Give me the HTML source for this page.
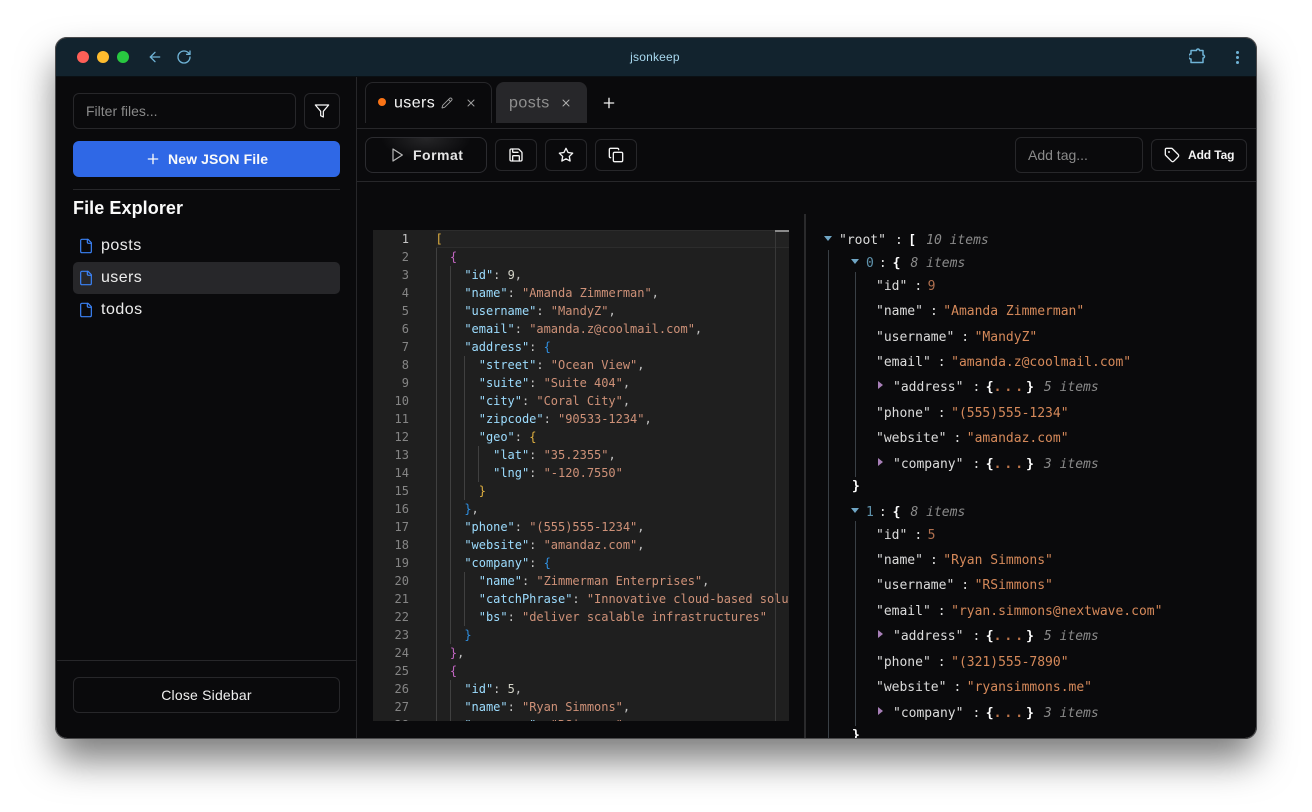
<!DOCTYPE html>
<html lang="en"><head><meta charset="utf-8"><title>jsonkeep</title>
<style>
html,body{margin:0;padding:0;width:1312px;height:812px;overflow:hidden;background:#fff}
*{box-sizing:border-box}
.a{position:absolute;white-space:pre}
body{font-family:"Liberation Sans",sans-serif;color:#fafafa}
#win{position:absolute;left:56px;top:38px;width:1200px;height:700px;border-radius:11px;box-shadow:0 22px 38px rgba(0,0,0,.52),0 0 0 1px #3a3a3c}
#clip{position:absolute;left:0;top:0;width:1312px;height:812px;overflow:hidden}
.box{position:absolute;border:1px solid #27272a;border-radius:6px;background:#0a0a0c}
.ln{position:absolute;background:#27272a}
svg{position:absolute;fill:none;stroke:currentColor;stroke-width:2;stroke-linecap:round;stroke-linejoin:round}
.code{position:absolute;left:0;top:0;font:12px/18px "DejaVu Sans Mono",monospace;color:#c4c4c4;white-space:pre;letter-spacing:-.02px}
.k{color:#9cdcfe}.s{color:#ce9178}.n{color:#d4d4c8}.y{color:#e0b040}.p{color:#c266c2}.b{color:#2f8fe0}
.g{position:absolute;width:1px;background:#404040}
.num{position:absolute;left:373px;width:36px;text-align:right;font:12px/18px "DejaVu Sans Mono",monospace;color:#858585;white-space:pre}
.t{position:absolute;font:13px/20px "DejaVu Sans Mono",monospace;color:#dcdcdc;white-space:pre}
.t i{color:#8a8a8a;font-style:italic;margin-left:10px}
.t b{color:#fff}
.t u{text-decoration:none;color:#d5895a}
.t em{font-style:normal;color:#b0704f}
.t .c{display:inline-block;margin:0 5.5px 0 7px}
.t .c2{display:inline-block;margin:0 5.5px 0 9px}
.t .c3{display:inline-block;margin:0 6px 0 5px}
.t .idx{color:#5f93ad}
.t .d{color:#c0774c;font-weight:bold;letter-spacing:3px}
.down{position:absolute;width:0;height:0;border-left:4.5px solid transparent;border-right:4.5px solid transparent;border-top:5px solid #6fa5c4}
.right{position:absolute;width:0;height:0;border-top:4px solid transparent;border-bottom:4px solid transparent;border-left:5px solid #a87fb8}
.tg{position:absolute;width:1px;background:#3a4046}
</style></head><body>
<div id="win"></div>
<div id="clip">
<div style="position:absolute;left:56px;top:38px;width:1200px;height:700px;border-radius:11px;overflow:hidden;background:#0a0a0c">
<div style="position:absolute;left:0;top:0;width:1200px;height:38px;background:#12232e"></div>
<div style="position:absolute;left:0;top:38px;width:1200px;height:1px;background:#0a1014"></div>
</div>

<!-- traffic lights -->
<div class="a" style="left:77px;top:51px;width:12px;height:12px;border-radius:50%;background:#ff5f57"></div>
<div class="a" style="left:97px;top:51px;width:12px;height:12px;border-radius:50%;background:#febc2e"></div>
<div class="a" style="left:117px;top:51px;width:12px;height:12px;border-radius:50%;background:#28c840"></div>
<svg style="left:147px;top:49px;color:#6fb3d6" width="16" height="16" viewBox="0 0 24 24"><path d="m12 19-7-7 7-7"/><path d="M19 12H5"/></svg>
<svg style="left:176px;top:49px;color:#6fb3d6" width="16" height="16" viewBox="0 0 24 24"><path d="M21 12a9 9 0 1 1-9-9c2.52 0 4.93 1 6.74 2.74L21 8"/><path d="M21 3v5h-5"/></svg>
<div class="a" style="left:555px;width:200px;top:49px;text-align:center;font-size:12px;line-height:16px;letter-spacing:.2px;color:#a8d8ee">jsonkeep</div>
<svg style="left:1189px;top:47px;color:#6fb3d6;stroke-width:1.5" width="18" height="18" viewBox="0 0 18 18"><path d="M2 3.500H7.500a1.500 1.500 0 0 1 3 0H14V8a1.500 1.500 0 0 1 0 3v4.500H2V12a2.500 2.500 0 0 1 0-5z"/></svg>
<div class="a" style="left:1236px;top:51px;width:3px;height:3px;border-radius:50%;background:#6fb3d6"></div>
<div class="a" style="left:1236px;top:56px;width:3px;height:3px;border-radius:50%;background:#6fb3d6"></div>
<div class="a" style="left:1236px;top:61px;width:3px;height:3px;border-radius:50%;background:#6fb3d6"></div>

<!-- sidebar -->
<div class="ln" style="left:356px;top:77px;width:1px;height:661px"></div>
<div class="box" style="left:73px;top:93px;width:223px;height:36px"></div>
<div class="a" style="left:86px;top:103px;font-size:14px;line-height:16px;color:#8a8a8a">Filter files...</div>
<div class="box" style="left:304px;top:93px;width:36px;height:36px"></div>
<svg style="left:314px;top:103px;color:#fafafa;stroke-width:1.8" width="16" height="16" viewBox="0 0 24 24"><polygon points="22 3 2 3 10 12.460 10 19 14 21 14 12.460 22 3"/></svg>
<div class="a" style="left:73px;top:141px;width:267px;height:36px;border-radius:6px;background:#2f68e6"></div>
<svg style="left:145px;top:151px;color:#fafafa" width="16" height="16" viewBox="0 0 24 24"><path d="M5 12h14"/><path d="M12 5v14"/></svg>
<div class="a" style="left:168px;top:151px;font-size:14px;line-height:16px;font-weight:bold;letter-spacing:.1px;color:#fafafa">New JSON File</div>
<div class="ln" style="left:73px;top:189px;width:267px;height:1px"></div>
<div class="a" style="left:73px;top:197px;font-size:18px;line-height:22px;font-weight:bold;letter-spacing:.08px;color:#fafafa">File Explorer</div>

<div class="a" style="left:73px;top:262px;width:267px;height:32px;border-radius:5px;background:#27272a"></div>
<svg style="left:78px;top:238px;color:#3b82f6;stroke-width:1.8" width="16" height="16" viewBox="0 0 24 24"><path d="M15 2H6a2 2 0 0 0-2 2v16a2 2 0 0 0 2 2h12a2 2 0 0 0 2-2V7Z"/><path d="M14 2v4a2 2 0 0 0 2 2h4"/></svg>
<svg style="left:78px;top:270px;color:#3b82f6;stroke-width:1.8" width="16" height="16" viewBox="0 0 24 24"><path d="M15 2H6a2 2 0 0 0-2 2v16a2 2 0 0 0 2 2h12a2 2 0 0 0 2-2V7Z"/><path d="M14 2v4a2 2 0 0 0 2 2h4"/></svg>
<svg style="left:78px;top:302px;color:#3b82f6;stroke-width:1.8" width="16" height="16" viewBox="0 0 24 24"><path d="M15 2H6a2 2 0 0 0-2 2v16a2 2 0 0 0 2 2h12a2 2 0 0 0 2-2V7Z"/><path d="M14 2v4a2 2 0 0 0 2 2h4"/></svg>
<div class="a" style="left:101px;top:236px;font-size:16px;line-height:20px;letter-spacing:.5px;color:#ececec">posts</div>
<div class="a" style="left:101px;top:268px;font-size:16px;line-height:20px;letter-spacing:.4px;color:#ececec">users</div>
<div class="a" style="left:101px;top:300px;font-size:16px;line-height:20px;letter-spacing:.5px;color:#ececec">todos</div>

<div class="ln" style="left:57px;top:660px;width:299px;height:1px"></div>
<div class="box" style="left:73px;top:677px;width:267px;height:36px"></div>
<div class="a" style="left:73px;width:267px;top:687px;text-align:center;font-size:14px;line-height:16px;letter-spacing:.2px;color:#f0f0f0">Close Sidebar</div>

<!-- tabs -->
<div class="a" style="left:365px;top:82px;width:127px;height:41px;border:1px solid #27272a;border-bottom:0;border-radius:8px 8px 0 0"></div>
<div class="a" style="left:378px;top:98px;width:8px;height:8px;border-radius:50%;background:#f97316"></div>
<div class="a" style="left:394px;top:93px;font-size:16px;line-height:20px;letter-spacing:.4px;color:#f4f4f4;transform:translateY(.5px)">users</div>
<svg style="left:441px;top:97px;color:#a0a0a0;stroke-width:1.8" width="12" height="12" viewBox="0 0 24 24"><path d="M21.174 6.812a1 1 0 0 0-3.986-3.987L3.842 16.174a2 2 0 0 0-.5.83l-1.321 4.352a.5.500 0 0 0 .623.622l4.353-1.320a2 2 0 0 0 .83-.497z"/><path d="m15 5 4 4"/></svg>
<svg style="left:465px;top:97px;color:#a0a0a0;stroke-width:2" width="12" height="12" viewBox="0 0 24 24"><path d="M18 6 6 18"/><path d="m6 6 12 12"/></svg>
<div class="a" style="left:496px;top:82px;width:91px;height:41px;background:#27272a;border-radius:8px 8px 0 0"></div>
<div class="a" style="left:509px;top:93px;font-size:16px;line-height:20px;letter-spacing:.5px;color:#8f8f8f;transform:translateY(.5px)">posts</div>
<svg style="left:560px;top:97px;color:#b0b0b0" width="12" height="12" viewBox="0 0 24 24"><path d="M18 6 6 18"/><path d="m6 6 12 12"/></svg>
<svg style="left:601px;top:95px;color:#f0f0f0" width="16" height="16" viewBox="0 0 24 24"><path d="M5 12h14"/><path d="M12 5v14"/></svg>
<div class="ln" style="left:357px;top:128px;width:899px;height:1px"></div>

<!-- toolbar -->
<div class="a" style="left:365px;top:137px;width:122px;height:36px;border:1px solid #2c2c30;border-radius:8px;background:radial-gradient(ellipse 45px 22px at 50% 0,#262628 0,#0a0a0c 100%)"></div>
<svg style="left:389px;top:147px;color:#b8b8b8;stroke-width:1.800" width="16" height="16" viewBox="0 0 24 24"><polygon points="6 3 20 12 6 21 6 3"/></svg>
<div class="a" style="left:413px;top:147px;font-size:14px;line-height:16px;font-weight:bold;letter-spacing:.5px;color:#e4e4e4">Format</div>
<div class="box" style="left:495px;top:139px;width:42px;height:32px"></div>
<div class="box" style="left:545px;top:139px;width:42px;height:32px"></div>
<div class="box" style="left:595px;top:139px;width:42px;height:32px"></div>
<svg style="left:508px;top:147px;color:#f4f4f4" width="16" height="16" viewBox="0 0 24 24"><path d="M15.200 3a2 2 0 0 1 1.400.6l3.800 3.800a2 2 0 0 1 .6 1.400V19a2 2 0 0 1-2 2H5a2 2 0 0 1-2-2V5a2 2 0 0 1 2-2z"/><path d="M17 21v-7a1 1 0 0 0-1-1H8a1 1 0 0 0-1 1v7"/><path d="M7 3v4a1 1 0 0 0 1 1h7"/></svg>
<svg style="left:558px;top:147px;color:#f4f4f4" width="16" height="16" viewBox="0 0 24 24"><polygon points="12 2 15.090 8.260 22 9.270 17 14.140 18.180 21.020 12 17.770 5.820 21.020 7 14.140 2 9.270 8.910 8.260 12 2"/></svg>
<svg style="left:608px;top:147px;color:#f4f4f4" width="16" height="16" viewBox="0 0 24 24"><rect x="8" y="8" width="14" height="14" rx="2"/><path d="M4 16c-1.100 0-2-.9-2-2V4c0-1.100.9-2 2-2h10c1.100 0 2 .9 2 2"/></svg>
<div class="box" style="left:1015px;top:137px;width:128px;height:36px"></div>
<div class="a" style="left:1028px;top:147px;font-size:14px;line-height:16px;color:#8a8a8a">Add tag...</div>
<div class="box" style="left:1151px;top:139px;width:96px;height:32px"></div>
<svg style="left:1164px;top:147px;color:#f4f4f4" width="16" height="16" viewBox="0 0 24 24"><path d="M12.586 2.586A2 2 0 0 0 11.172 2H4a2 2 0 0 0-2 2v7.172a2 2 0 0 0 .586 1.414l8.704 8.704a2.426 2.426 0 0 0 3.420 0l6.580-6.580a2.426 2.426 0 0 0 0-3.420z"/><circle cx="7.500" cy="7.500" r=".5" fill="currentColor"/></svg>
<div class="a" style="left:1188px;top:148px;font-size:12px;line-height:14px;font-weight:bold;letter-spacing:-.1px;color:#f4f4f4">Add Tag</div>
<div class="ln" style="left:357px;top:181px;width:899px;height:1px"></div>

<!-- editor -->
<div class="a" style="left:373px;top:230px;width:416px;height:491px;background:#1f1f1f;overflow:hidden">
<div class="a" style="left:63px;top:0;width:353px;height:18px;background:#222;border-top:1px solid #2c2c2c;border-bottom:1px solid #2c2c2c"></div>
<div class="g" style="left:63px;top:18px;height:473px"></div>
<div class="g" style="left:77px;top:36px;height:378px"></div>
<div class="g" style="left:77px;top:450px;height:41px"></div>
<div class="g" style="left:91px;top:126px;height:144px"></div>
<div class="g" style="left:91px;top:342px;height:54px"></div>
<div class="g" style="left:105px;top:216px;height:36px"></div>
<div class="g" style="left:402px;top:0;height:491px;background:#383838"></div>
<div class="a" style="left:402px;top:0;width:14px;height:2px;background:#8a8a8a"></div>
<div class="code" style="left:62.500px"><span class="y">[</span>
  <span class="p">{</span>
    <span class="k">"id"</span>: <span class="n">9</span>,
    <span class="k">"name"</span>: <span class="s">"Amanda Zimmerman"</span>,
    <span class="k">"username"</span>: <span class="s">"MandyZ"</span>,
    <span class="k">"email"</span>: <span class="s">"amanda.z@coolmail.com"</span>,
    <span class="k">"address"</span>: <span class="b">{</span>
      <span class="k">"street"</span>: <span class="s">"Ocean View"</span>,
      <span class="k">"suite"</span>: <span class="s">"Suite 404"</span>,
      <span class="k">"city"</span>: <span class="s">"Coral City"</span>,
      <span class="k">"zipcode"</span>: <span class="s">"90533-1234"</span>,
      <span class="k">"geo"</span>: <span class="y">{</span>
        <span class="k">"lat"</span>: <span class="s">"35.2355"</span>,
        <span class="k">"lng"</span>: <span class="s">"-120.7550"</span>
      <span class="y">}</span>
    <span class="b">}</span>,
    <span class="k">"phone"</span>: <span class="s">"(555)555-1234"</span>,
    <span class="k">"website"</span>: <span class="s">"amandaz.com"</span>,
    <span class="k">"company"</span>: <span class="b">{</span>
      <span class="k">"name"</span>: <span class="s">"Zimmerman Enterprises"</span>,
      <span class="k">"catchPhrase"</span>: <span class="s">"Innovative cloud-based solutions"</span>,
      <span class="k">"bs"</span>: <span class="s">"deliver scalable infrastructures"</span>
    <span class="b">}</span>
  <span class="p">}</span>,
  <span class="p">{</span>
    <span class="k">"id"</span>: <span class="n">5</span>,
    <span class="k">"name"</span>: <span class="s">"Ryan Simmons"</span>,
    <span class="k">"username"</span>: <span class="s">"RSimmons"</span>,
</div>
</div>
<div class="num" style="top:230px;height:491px;overflow:hidden"><span style="color:#c6c6c6">1</span>
2
3
4
5
6
7
8
9
10
11
12
13
14
15
16
17
18
19
20
21
22
23
24
25
26
27
28</div>

<!-- divider -->
<div class="a" style="left:804px;top:214px;width:2px;height:524px;background:#2a2a2c"></div>

<!-- tree -->
<div class="tg" style="left:828px;top:250px;height:488px"></div>
<div class="tg" style="left:855px;top:272px;height:205px"></div>
<div class="tg" style="left:855px;top:521px;height:205px"></div>

<div class="down" style="left:824px;top:236px"></div>
<div class="t" style="left:839px;top:231px">"root"<span class="c2">:</span><b>[</b><i>10 items</i></div>
<div class="down" style="left:851px;top:259px"></div>
<div class="t" style="left:866px;top:254px"><span class="idx">0</span><span class="c3">:</span><b>{</b><i>8 items</i></div>
<div class="t" style="left:876px;top:277px">"id"<span class="c">:</span><em>9</em></div>
<div class="t" style="left:876px;top:302px">"name"<span class="c">:</span><u>"Amanda Zimmerman"</u></div>
<div class="t" style="left:876px;top:328px">"username"<span class="c">:</span><u>"MandyZ"</u></div>
<div class="t" style="left:876px;top:353px">"email"<span class="c">:</span><u>"amanda.z@coolmail.com"</u></div>
<div class="right" style="left:878px;top:381px"></div>
<div class="t" style="left:893px;top:378px">"address"<span class="c2">:</span><b>{</b><span class="d">...</span><b>}</b><i>5 items</i></div>
<div class="t" style="left:876px;top:404px">"phone"<span class="c">:</span><u>"(555)555-1234"</u></div>
<div class="t" style="left:876px;top:429px">"website"<span class="c">:</span><u>"amandaz.com"</u></div>
<div class="right" style="left:878px;top:458px"></div>
<div class="t" style="left:893px;top:455px">"company"<span class="c2">:</span><b>{</b><span class="d">...</span><b>}</b><i>3 items</i></div>
<div class="t" style="left:852px;top:477px"><b>}</b></div>
<div class="down" style="left:851px;top:508px"></div>
<div class="t" style="left:866px;top:503px"><span class="idx">1</span><span class="c3">:</span><b>{</b><i>8 items</i></div>
<div class="t" style="left:876px;top:526px">"id"<span class="c">:</span><em>5</em></div>
<div class="t" style="left:876px;top:551px">"name"<span class="c">:</span><u>"Ryan Simmons"</u></div>
<div class="t" style="left:876px;top:576px">"username"<span class="c">:</span><u>"RSimmons"</u></div>
<div class="t" style="left:876px;top:602px">"email"<span class="c">:</span><u>"ryan.simmons@nextwave.com"</u></div>
<div class="right" style="left:878px;top:630px"></div>
<div class="t" style="left:893px;top:627px">"address"<span class="c2">:</span><b>{</b><span class="d">...</span><b>}</b><i>5 items</i></div>
<div class="t" style="left:876px;top:653px">"phone"<span class="c">:</span><u>"(321)555-7890"</u></div>
<div class="t" style="left:876px;top:678px">"website"<span class="c">:</span><u>"ryansimmons.me"</u></div>
<div class="right" style="left:878px;top:707px"></div>
<div class="t" style="left:893px;top:704px">"company"<span class="c2">:</span><b>{</b><span class="d">...</span><b>}</b><i>3 items</i></div>
<div class="t" style="left:852px;top:726px;height:12px;overflow:hidden"><b>}</b></div>

<!-- window outline over content -->
<div class="a" style="left:55px;top:37px;width:1202px;height:702px;border:1px solid #4a4a4c;border-radius:12px;pointer-events:none"></div>
</div>
</body></html>
